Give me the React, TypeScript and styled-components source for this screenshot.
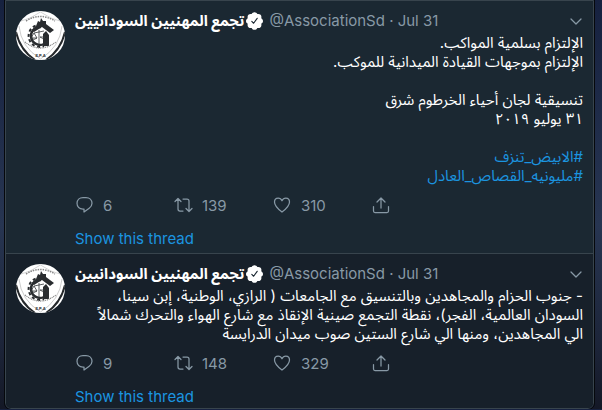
import React from "react";
import styled, { createGlobalStyle } from "styled-components";

const GlobalStyle = createGlobalStyle`
  * { box-sizing: border-box; }
  body {
    margin: 0;
    background: linear-gradient(180deg, #16213f 0%, #273551 55%, #1c2438 85%, #141826 100%);
    font-family: Inter, "Noto Sans Arabic", "DejaVu Sans", sans-serif;
    font-size: 15px;
    color: #fff;
  }
`;

const Timeline = styled.main`
  margin: 0 8px 0 5px;
  border: 1px solid #38444d;
  border-radius: 0 0 6px 6px;
  outline: 1px solid #05080c;
  overflow: hidden;
`;

const TweetCard = styled.article<{ $raised?: boolean }>`
  display: grid;
  grid-template-columns: 49px minmax(0, 1fr);
  column-gap: 10px;
  padding: 10px 10px 4px;
  background: ${(p) => (p.$raised ? "#1b2832" : "#17202a")};
  & + & { border-top: 1px solid #38444d; }
  &:last-child { padding-bottom: 1px; }
`;

const Header = styled.header`
  display: flex;
  align-items: center;
  height: 20px;
  margin-bottom: 2px;
  white-space: nowrap;
`;

const Name = styled.strong`
  margin-right: 2px;
  font-weight: 700;
  line-height: 20px;
`;

const Handle = styled.span`
  margin-left: 6px;
  color: #8899a6;
  line-height: 20px;
`;

const IconButton = styled.button`
  display: flex;
  margin-left: auto;
  padding: 0;
  border: 0;
  background: none;
  color: #8899a6;
`;

const Message = styled.p`
  margin: 0;
  line-height: 19px;
  white-space: nowrap;
`;

const Hashtag = styled.a`
  color: #1b95e0;
  text-decoration: none;
`;

const Actions = styled.div`
  display: grid;
  grid-template-columns: repeat(4, 99px);
  margin: 10px 0 14px;
`;

const Action = styled.button`
  display: flex;
  align-items: center;
  gap: 9px;
  height: 20px;
  padding: 0;
  border: 0;
  background: none;
  color: #8899a6;
  font: inherit;
`;

const ThreadLink = styled.a`
  display: block;
  color: #1b95e0;
  line-height: 20px;
  text-decoration: none;
`;

const Icon = styled.svg`
  display: block;
  flex: none;
  fill: none;
  stroke: currentColor;
  stroke-width: 1.25;
  stroke-linecap: round;
  stroke-linejoin: round;
`;

const Logo = styled.svg`
  display: block;
  border-radius: 50%;
`;

const Emblem = () => (
  <Logo width="49" height="49" viewBox="0 0 49 49" role="img" aria-label="SPA">
    <rect width="49" height="49" fill="#fff" />
    <path d="M2 11Q15 8 24.500 1Q34 8 47 11" fill="none" stroke="#bbb" strokeWidth=".6" />
    <path d="M0 21Q4 39 19 49M49 21Q45 39 30 49" fill="none" stroke="#25282b" strokeWidth="2" />
    <path d="M3 15Q5 36 24.500 48Q44 36 46 15" fill="none" stroke="#999" strokeWidth=".5" />
    <path d="M10 10Q24 1 39 10" fill="none" stroke="#888" strokeWidth="1.500" strokeDasharray="1.500 1" />
    <path d="M25 16A9 9 0 1 0 28 33" fill="none" stroke="#292c2f" strokeWidth="2.500" />
    <path d="M25 14A11 11 0 1 0 28 35" fill="none" stroke="#292c2f" strokeWidth="2" strokeDasharray="3 2.500" />
    <path d="M27 23L30 20L33 24V35H27Z" fill="#292c2f" />
    <path d="M20 15L22 10L24 11L25 7L27 10L30 10L30 13L38 19L34 22L26 16L18 21L16 19Z" fill="#292c2f" />
    <path d="M23 19V33M18 22L28 20M15 27Q18 30 21 27ZM24 26Q27 29 29 26ZM18 22L15 27M18 22L21 27" fill="none" stroke="#34373a" strokeWidth=".8" />
    <path d="M9 31Q24 43 40 31" fill="none" stroke="#888" strokeWidth="1.300" strokeDasharray="1 .8" />
    <text x="24.500" y="46" textAnchor="middle" fontSize="4" fontWeight="700" fill="#292c2f">S.P.A</text>
  </Logo>
);

const Verified = () => (
  <Icon width="17" height="18" viewBox="3 2 19 20" role="img" aria-label="Verified account">
    <path
      d="M22 12c0-1.400-.8-2.600-2-3.200.5-1.300.2-2.700-.7-3.700-1-.9-2.400-1.200-3.600-.8C15.100 3 13.900 2.200 12.500 2.200S9.900 3 9.300 4.300c-1.200-.4-2.600-.1-3.600.8-.9 1-1.200 2.400-.7 3.700-1.200.6-2 1.800-2 3.200s.8 2.600 2 3.200c-.5 1.300-.2 2.700.7 3.700 1 .9 2.400 1.200 3.600.8.6 1.300 1.800 2.100 3.200 2.100s2.600-.8 3.200-2.100c1.200.4 2.600.1 3.600-.8.9-1 1.200-2.400.7-3.700 1.200-.6 2-1.800 2-3.200z"
      fill="#fff" stroke="none"
    />
    <path d="M9.500 12.500L11.500 14.500L15.500 9" stroke="#1b2832" />
  </Icon>
);

const Chevron = () => (
  <Icon width="13" height="12" viewBox="0 0 13 12"><path d="M1 4L6 9L11 4" /></Icon>
);

const Reply = () => (
  <Icon width="19" height="20" viewBox="0 0 19 20">
    <path d="M8 2.500H11C14.500 2.500 17 4.800 17 8.300C17 10.500 16 12 14.200 13.200L9 17V14H8C4.500 14 2 11.800 2 8.300C2 4.800 4.500 2.500 8 2.500Z" />
  </Icon>
);

const Retweet = () => (
  <Icon width="19" height="20" viewBox="0 0 19 20">
    <path d="M1 6.500L4 3.500L7 6.500M4 4V14Q4 16 6 16H9M9 4H13Q15 4 15 6V16M12 13.500L15 16.500L18 13.500" />
  </Icon>
);

const Heart = () => (
  <Icon width="19" height="20" viewBox="0 0 19 20">
    <path d="M9 17Q1.500 11.500 1.500 7C1.500 4.500 3 3 5.200 3Q7.800 3 9 5.800Q10.200 3 12.800 3C15 3 16.500 4.500 16.500 7Q16.500 11.500 9 17Z" />
  </Icon>
);

const Share = () => (
  <Icon width="19" height="20" viewBox="0 0 19 20">
    <path d="M9 13V3M5 7L9 3L13 7M1.500 11.500V16Q1.500 17.500 3 17.500H15Q16.500 17.500 16.500 16V11.500" />
  </Icon>
);

interface TweetProps {
  raised?: boolean;
  replies: number;
  retweets: number;
  likes: number;
  children: React.ReactNode;
}

const Tweet = ({ raised, replies, retweets, likes, children }: TweetProps) => (
  <TweetCard $raised={raised}>
    <Emblem />
    <div>
      <Header>
        <Name dir="rtl" lang="ar">تجمع المهنيين السودانيين</Name>
        <Verified />
        <Handle>@AssociationSd · Jul 31</Handle>
        <IconButton aria-label="More"><Chevron /></IconButton>
      </Header>
      <Message dir="rtl" lang="ar">{children}</Message>
      <Actions>
        <Action aria-label={`Reply ${replies}`}><Reply />{replies}</Action>
        <Action aria-label={`Retweet ${retweets}`}><Retweet />{retweets}</Action>
        <Action aria-label={`Like ${likes}`}><Heart />{likes}</Action>
        <Action aria-label="Share"><Share /></Action>
      </Actions>
      <ThreadLink href="#thread">Show this thread</ThreadLink>
    </div>
  </TweetCard>
);

export default function App() {
  return (
    <>
      <GlobalStyle />
      <Timeline>
        <Tweet raised replies={6} retweets={139} likes={310}>
          الإلتزام بسلمية المواكب.<br />
          الإلتزام بموجهات القيادة الميدانية للموكب.<br />
          <br />
          تنسيقية لجان أحياء الخرطوم شرق<br />
          ٣١ يوليو ٢٠١٩<br />
          <br />
          <Hashtag href="#abyad">#الابيض_تنزف</Hashtag><br />
          <Hashtag href="#justice">#مليونيه_القصاص_العادل</Hashtag>
        </Tweet>
        <Tweet replies={9} retweets={148} likes={329}>
          - جنوب الحزام والمجاهدين وبالتنسيق مع الجامعات ( الرازي، الوطنية، إبن سينا،<br />
          السودان العالمية، الفجر)، نقطة التجمع صينية الإنقاذ مع شارع الهواء والتحرك شمالاً<br />
          الي المجاهدين، ومنها الي شارع الستين صوب ميدان الدرايسة
        </Tweet>
      </Timeline>
    </>
  );
}
